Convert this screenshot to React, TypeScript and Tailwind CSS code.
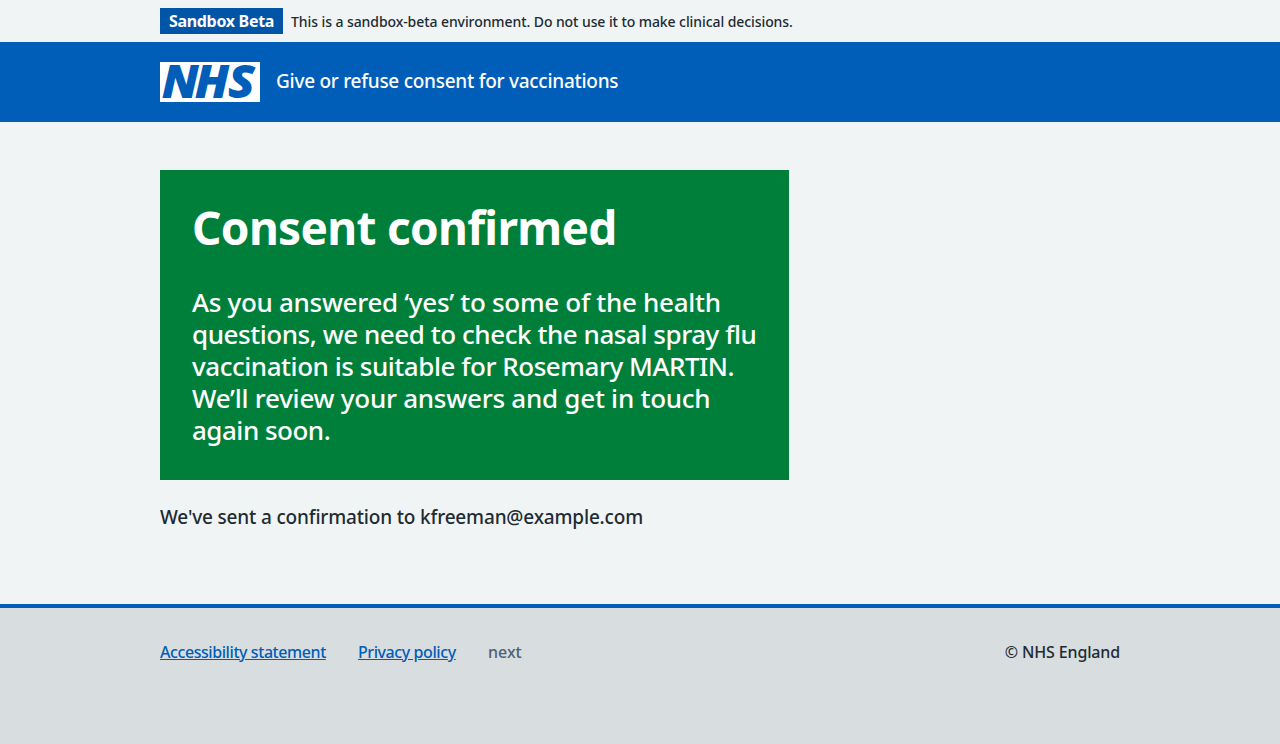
const panelLines = [
  { text: "As you answered ‘yes’ to some of the health", spacing: "tracking-[-0.3px]" },
  { text: "questions, we need to check the nasal spray flu", spacing: "tracking-[-0.45px]" },
  { text: "vaccination is suitable for Rosemary MARTIN.", spacing: "tracking-[-0.46px]" },
  { text: "We’ll review your answers and get in touch", spacing: "tracking-[-0.25px]" },
  { text: "again soon.", spacing: "tracking-[-0.5px]" },
];

function NhsLogo() {
  return (
    <svg viewBox="0 0 100 40" className="block h-10 w-[100px]" role="img" aria-label="NHS">
      <rect width="100" height="40" fill="#fff" />
      <text
        transform="scale(1.08 1)"
        x="2.4 32.8 63.8"
        y="35.3"
        fill="#005eb8"
        stroke="#005eb8"
        strokeWidth="1.9"
        fontFamily="'Open Sans', 'Noto Sans', sans-serif"
        fontWeight="700"
        fontStyle="italic"
        fontSize="43"
      >
        NHS
      </text>
    </svg>
  );
}

export default function App() {
  return (
    <div className="flex min-h-[744px] flex-col bg-[#f0f4f5] font-['Noto_Sans',sans-serif] font-medium text-[#212b32]">
      <div className="h-[42px] pt-2">
        <div className="mx-auto flex w-[960px] items-center gap-2">
          <strong className="flex h-[26px] w-[123px] items-center justify-center whitespace-nowrap bg-[#0055a6] text-base font-bold tracking-[-0.3px] text-white">
            Sandbox Beta
          </strong>
          <span className="whitespace-nowrap pt-0.5 text-sm tracking-[-0.08px]">
            This is a sandbox-beta environment. Do not use it to make clinical decisions.
          </span>
        </div>
      </div>
      <header className="h-20 bg-[#005eb8]">
        <div className="mx-auto flex h-20 w-[960px] items-center gap-4">
          <NhsLogo />
          <span className="whitespace-nowrap pb-0.5 text-[19px] tracking-[-0.27px] text-white">
            Give or refuse consent for vaccinations
          </span>
        </div>
      </header>
      <main className="mx-auto h-[482px] w-[960px] pt-12">
        <section className="h-[310px] w-[629px] bg-[#007f3b] px-8 pt-[30px] text-white">
          <h1 className="w-max text-[46px] leading-[54px] font-bold tracking-[-0.7px]">Consent confirmed</h1>
          <div className="mt-8 text-[26px] leading-8">
            {panelLines.map((line) => (
              <p key={line.text} className={`w-max whitespace-nowrap ${line.spacing}`}>
                {line.text}
              </p>
            ))}
          </div>
        </section>
        <p className="mt-[23px] w-max text-[19px] leading-7 tracking-[-0.17px]">
          We've sent a confirmation to kfreeman@example.com
        </p>
      </main>
      <footer className="flex-1 border-t-4 border-[#005eb8] bg-[#d8dde0]">
        <div className="mx-auto flex w-[960px] justify-between pt-8 text-base leading-6">
          <nav className="flex gap-8">
            <a className="w-[166px] whitespace-nowrap tracking-[-0.43px] text-[#005eb8] underline">
              Accessibility statement
            </a>
            <a className="w-[98px] whitespace-nowrap tracking-[-0.42px] text-[#005eb8] underline">Privacy policy</a>
            <span className="text-[#4c6272]">next</span>
          </nav>
          <p className="tracking-[-0.15px]">© NHS England</p>
        </div>
      </footer>
    </div>
  );
}
